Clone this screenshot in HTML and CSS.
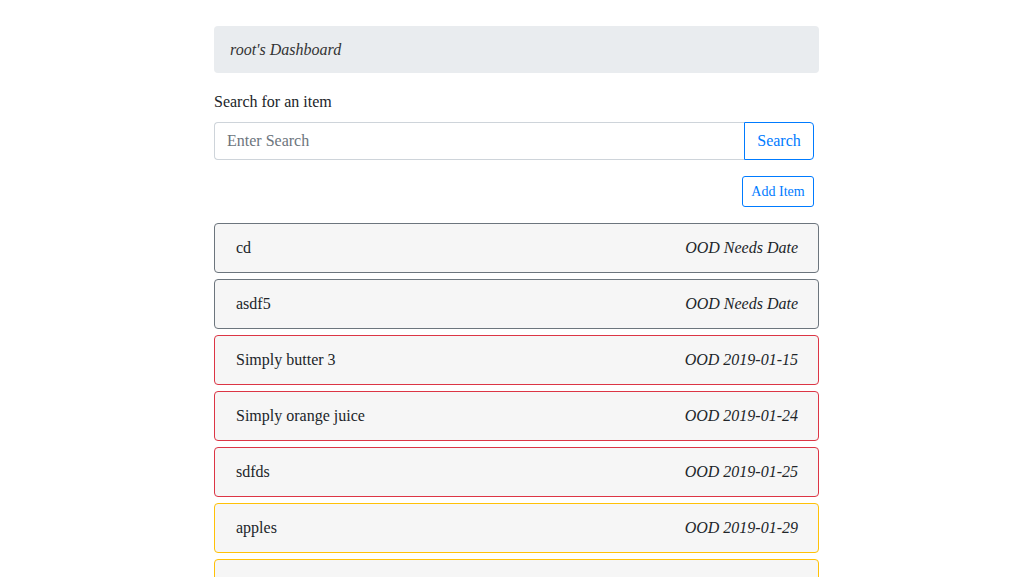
FILE: index.html
```html
<!DOCTYPE html>
<html>
<head>
<meta charset="utf-8">
<link rel="stylesheet" href="styles.css">
</head>
<body>
<div class="page">
  <div class="header"><em>root's Dashboard</em></div>
  <div class="search-form">
    <label class="label" for="q">Search for an item</label>
    <div class="input-group">
      <input id="q" class="input" type="text" placeholder="Enter Search">
      <button class="btn btn-search">Search</button>
    </div>
    <div class="actions">
      <button class="btn btn-sm">Add Item</button>
    </div>
  </div>
  <ul class="list">
    <li class="item item-grey"><span>cd</span><em>OOD Needs Date</em></li>
    <li class="item item-grey"><span>asdf5</span><em>OOD Needs Date</em></li>
    <li class="item item-red"><span>Simply butter 3</span><em>OOD 2019-01-15</em></li>
    <li class="item item-red"><span>Simply orange juice</span><em>OOD 2019-01-24</em></li>
    <li class="item item-red"><span>sdfds</span><em>OOD 2019-01-25</em></li>
    <li class="item item-yellow"><span>apples</span><em>OOD 2019-01-29</em></li>
    <li class="item item-yellow"></li>
  </ul>
</div>
</body>
</html>
```
FILE: styles.css
```css
html, body {
  margin: 0;
  padding: 0;
  overflow: hidden;
  background: #fff;
}
body {
  font-family: "Liberation Serif", "Times New Roman", serif;
  font-size: 16px;
  line-height: 24px;
  color: #212529;
}
.page {
  width: 605px;
  margin: 26px 0 0 214px;
}
.header {
  height: 47px;
  background: #e9ecef;
  border-radius: 4px;
  padding: 0 16px;
  display: flex;
  align-items: center;
  color: #333;
}
.search-form {
  padding-right: 5px;
  margin-top: 17px;
}
.label {
  display: block;
  margin-bottom: 8px;
}
.input-group {
  display: flex;
  height: 38px;
}
.input {
  flex: 1;
  min-width: 0;
  box-sizing: border-box;
  height: 38px;
  border: 1px solid #ced4da;
  border-right: none;
  border-radius: 4px 0 0 4px;
  padding: 6px 12px;
  font-family: inherit;
  font-size: 16px;
  color: #495057;
  outline: none;
}
.input::placeholder {
  color: #6c757d;
}
.btn {
  font-family: inherit;
  background: #fff;
  color: #007bff;
  border: 1px solid #007bff;
  cursor: pointer;
}
.btn-search {
  width: 70px;
  height: 38px;
  font-size: 16px;
  border-radius: 0 4px 4px 0;
  padding: 0;
}
.actions {
  display: flex;
  justify-content: flex-end;
  margin-top: 16px;
}
.btn-sm {
  height: 31px;
  width: 72px;
  padding: 0;
  font-size: 14px;
  border-radius: 3px;
}
.list {
  list-style: none;
  margin: 16px 0 0;
  padding: 0;
  display: flex;
  flex-direction: column;
  gap: 6px;
}
.item {
  box-sizing: border-box;
  height: 50px;
  flex-shrink: 0;
  display: flex;
  align-items: center;
  justify-content: space-between;
  padding: 0 20px 0 21px;
  background: #f6f6f6;
  border: 1px solid #6c757d;
  border-radius: 4px;
}
.item-grey { border-color: #6c757d; }
.item-red { border-color: #dc3545; }
.item-yellow { border-color: #ffc107; }
```
